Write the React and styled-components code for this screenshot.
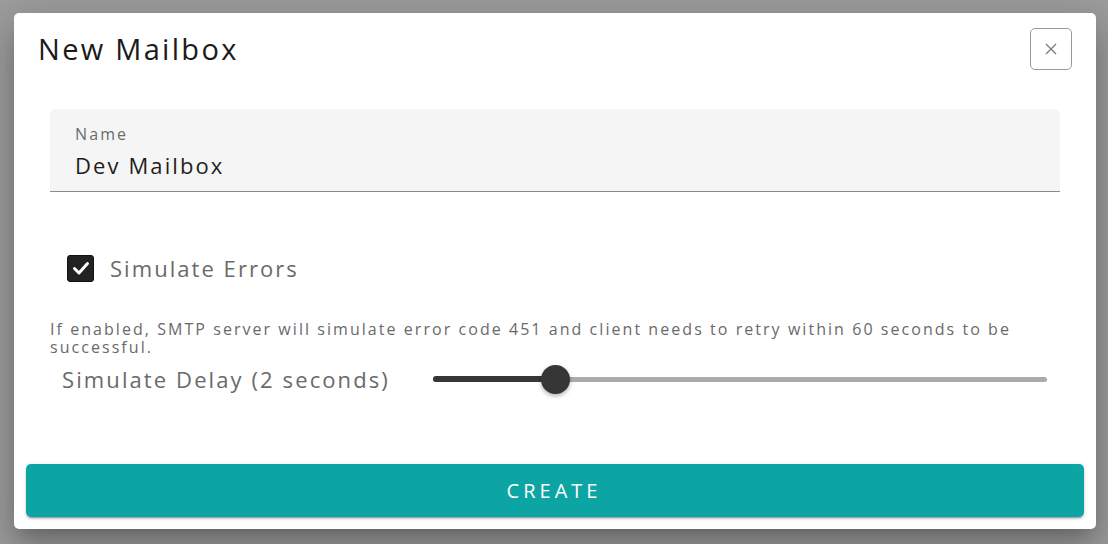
import React from "react";
import styled, { createGlobalStyle } from "styled-components";

const Global = createGlobalStyle`
  html, body { margin: 0; padding: 0; }
  body {
    width: 1108px;
    height: 544px;
    overflow: hidden;
    font-family: "Open Sans", "Noto Sans", sans-serif;
    background: #9d9d9d;
  }
  * { box-sizing: border-box; }
`;

const Overlay = styled.div`
  width: 1108px;
  height: 544px;
  padding: 13px 12px 0 14px;
  background: #9d9d9d;
`;

const Dialog = styled.div`
  width: 1082px;
  height: 516px;
  background: #fff;
  border-radius: 5px;
  box-shadow: 0 11px 15px -7px rgba(0, 0, 0, 0.2),
    0 24px 38px 3px rgba(0, 0, 0, 0.14), 0 9px 46px 8px rgba(0, 0, 0, 0.12);
  display: flex;
  flex-direction: column;
`;

const Header = styled.div`
  display: flex;
  align-items: center;
  justify-content: space-between;
  padding: 15px 24px 0 24px;
`;

const Title = styled.h2`
  margin: 0;
  font-size: 29px;
  font-weight: 400;
  color: #1b1b1b;
  letter-spacing: 2.3px;
  line-height: 42px;
`;

const CloseButton = styled.button`
  width: 42px;
  height: 42px;
  border: 1px solid #9a9a9a;
  border-radius: 5px;
  background: #fff;
  display: flex;
  align-items: center;
  justify-content: center;
  padding: 0;
  cursor: pointer;
`;

const Body = styled.div`
  padding: 39px 36px 0 36px;
  display: flex;
  flex-direction: column;
`;

const Field = styled.div`
  height: 83px;
  background: #f5f5f5;
  border-radius: 5px 5px 0 0;
  border-bottom: 1px solid #8a8a8a;
  padding: 15px 25px 0 25px;
`;

const FieldLabel = styled.div`
  font-size: 16px;
  color: #6b6b6b;
  letter-spacing: 2.1px;
  line-height: 20px;
`;

const FieldValue = styled.div`
  margin-top: 6px;
  font-size: 22px;
  color: #1e1e1e;
  letter-spacing: 2.1px;
  line-height: 30px;
`;

const CheckRow = styled.label`
  display: flex;
  align-items: center;
  gap: 16px;
  margin-top: 62px;
  padding-left: 17px;
  height: 28px;
`;

const CheckBox = styled.span`
  width: 27px;
  height: 27px;
  border-radius: 3px;
  background: #222;
  border: 1px solid #111;
  display: flex;
  align-items: center;
  justify-content: center;
`;

const CheckText = styled.span`
  font-size: 22px;
  color: #6a6a6a;
  letter-spacing: 2.05px;
`;

const Helper = styled.p`
  margin: 38px 0 0 0;
  font-size: 16px;
  line-height: 18px;
  color: #6a6a6a;
  letter-spacing: 2.05px;
`;

const DelayRow = styled.div`
  display: grid;
  grid-template-columns: 371px 1fr;
  align-items: center;
  padding: 0 13px 0 12px;
  height: 32px;
  margin-top: 7px;
`;

const DelayLabel = styled.span`
  font-size: 22px;
  color: #6a6a6a;
  letter-spacing: 2.1px;
`;

const Slider = styled.div`
  position: relative;
  height: 30px;
  display: flex;
  align-items: center;
`;

const Track = styled.div`
  position: relative;
  width: 100%;
  height: 5px;
  border-radius: 3px;
  background: #ababab;
`;

const Fill = styled.div`
  position: absolute;
  left: 0;
  top: -0.5px;
  height: 6px;
  border-radius: 3px;
  background: #363636;
`;

const Thumb = styled.div`
  position: absolute;
  top: 50%;
  width: 29px;
  height: 29px;
  margin-left: -14.5px;
  margin-top: -14px;
  border-radius: 50%;
  background: #363636;
  box-shadow: 0 2px 4px rgba(0, 0, 0, 0.3);
`;

const Footer = styled.div`
  margin-top: auto;
  padding: 0 12px 12px 12px;
`;

const CreateButton = styled.button`
  width: 100%;
  height: 53px;
  border: none;
  border-radius: 5px;
  background: #0da5a4;
  color: #fff;
  font-family: "Open Sans", "Noto Sans", sans-serif;
  font-size: 20px;
  letter-spacing: 4px;
  padding-left: 4px;
  box-shadow: 0 3px 1px -2px rgba(0, 0, 0, 0.2), 0 2px 2px 0 rgba(0, 0, 0, 0.14),
    0 1px 5px 0 rgba(0, 0, 0, 0.12);
  cursor: pointer;
`;

export default function App() {
  const delay = 2;
  const max = 10;
  const pct = (delay / max) * 100;
  return (
    <>
      <Global />
      <Overlay>
        <Dialog>
          <Header>
            <Title>New Mailbox</Title>
            <CloseButton aria-label="close">
              <svg width="12" height="12" viewBox="0 0 12 12">
                <path d="M1 1 L11 11 M11 1 L1 11" stroke="#7d7d7d" strokeWidth="1.4" fill="none" />
              </svg>
            </CloseButton>
          </Header>
          <Body>
            <Field>
              <FieldLabel>Name</FieldLabel>
              <FieldValue>Dev Mailbox</FieldValue>
            </Field>
            <CheckRow>
              <CheckBox>
                <svg width="20" height="20" viewBox="0 0 20 20">
                  <path d="M3.5 10.5 L8 15 L16.5 5.5" stroke="#fff" strokeWidth="3" fill="none" strokeLinecap="round" strokeLinejoin="round" />
                </svg>
              </CheckBox>
              <CheckText>Simulate Errors</CheckText>
            </CheckRow>
            <Helper>
              If enabled, SMTP server will simulate error code 451 and client needs to retry within 60 seconds to be successful.
            </Helper>
            <DelayRow>
              <DelayLabel>Simulate Delay ({delay} seconds)</DelayLabel>
              <Slider>
                <Track>
                  <Fill style={{ width: `${pct}%` }} />
                  <Thumb style={{ left: `${pct}%` }} />
                </Track>
              </Slider>
            </DelayRow>
          </Body>
          <Footer>
            <CreateButton>CREATE</CreateButton>
          </Footer>
        </Dialog>
      </Overlay>
    </>
  );
}
